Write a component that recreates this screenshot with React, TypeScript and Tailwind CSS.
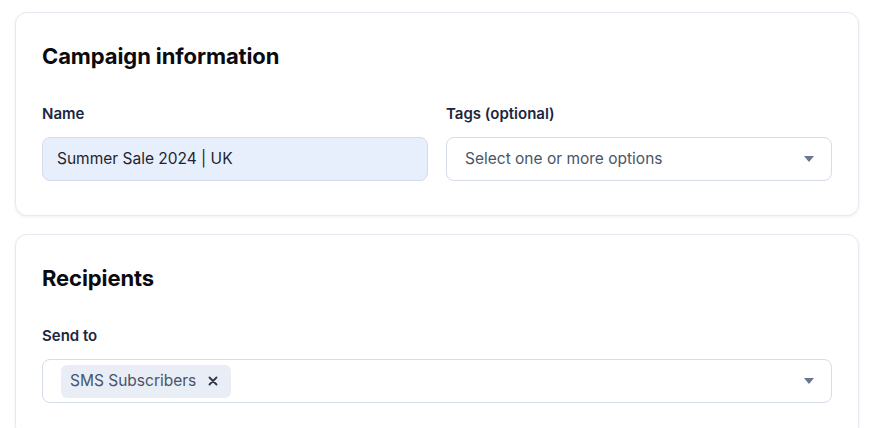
const Caret = () => (
  <svg width="10" height="6" viewBox="0 0 10 6" className="shrink-0">
    <path d="M0 0 L10 0 L5 6 Z" fill="#6b778c" />
  </svg>
);

const Card = ({ title, children }: { title: string; children: React.ReactNode }) => (
  <section className="bg-white border border-[#e6e9f2] rounded-xl shadow-[0_1px_3px_rgba(30,41,59,0.08)] px-[26px] pt-[28px] pb-[34px]">
    <h2 className="text-[22px] leading-[30px] font-bold text-[#0b0b0f] tracking-[-0.1px]">{title}</h2>
    <div className="mt-[33px]">{children}</div>
  </section>
);

const Label = ({ children }: { children: React.ReactNode }) => (
  <div className="text-[15px] leading-[20px] font-semibold text-[#1a2740] mb-[13px]">{children}</div>
);

export default function App() {
  return (
    <div className="min-h-screen bg-white pl-[15px] pr-[25px] pt-[12px] flex flex-col gap-[18px] font-['Inter',sans-serif] antialiased">
      <Card title="Campaign information">
        <div className="grid grid-cols-2 gap-[18px]">
          <div>
            <Label>Name</Label>
            <div className="h-[44px] rounded-lg border border-[#d3dbec] bg-[#e8effc] px-[14px] flex items-center text-[15.5px] text-[#1f2430]">
              Summer Sale 2024 | UK
            </div>
          </div>
          <div>
            <Label>Tags (optional)</Label>
            <div className="h-[44px] rounded-lg border border-[#d6dcea] bg-white pl-[18px] pr-[17px] flex items-center justify-between text-[15.5px] text-[#4a5568]">
              <span>Select one or more options</span>
              <Caret />
            </div>
          </div>
        </div>
      </Card>
      <Card title="Recipients">
        <Label>Send to</Label>
        <div className="h-[44px] rounded-lg border border-[#d6dcea] bg-white pl-[18px] pr-[17px] flex items-center justify-between">
          <span className="h-[33px] rounded-md bg-[#e9edf6] pl-[9px] pr-[13px] flex items-center gap-[12px] text-[15.5px] text-[#475569]">
            SMS Subscribers
            <svg width="10" height="10" viewBox="0 0 10 10" className="shrink-0">
              <path d="M1.5 1.5 L8.5 8.5 M8.5 1.5 L1.5 8.5" stroke="#2d3748" strokeWidth="1.8" strokeLinecap="round" />
            </svg>
          </span>
          <Caret />
        </div>
      </Card>
    </div>
  );
}
